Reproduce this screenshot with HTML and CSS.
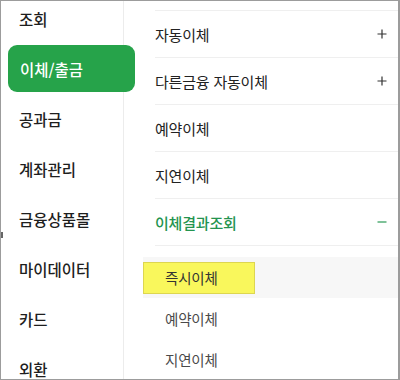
FILE: index.html
```html
<!DOCTYPE html>
<html lang="ko">
<head>
<meta charset="utf-8">
<link rel="stylesheet" href="styles.css">
</head>
<body>
<div class="frame">
  <nav class="side">
    <ul class="side-list">
      <li class="side-item">조회</li>
      <li class="side-item active">이체/출금</li>
      <li class="side-item">공과금</li>
      <li class="side-item">계좌관리</li>
      <li class="side-item">금융상품몰</li>
      <li class="side-item">마이데이터</li>
      <li class="side-item">카드</li>
      <li class="side-item">외환</li>
    </ul>
  </nav>
  <main class="panel">
    <div class="row"><span>자동이체</span>
      <svg class="ico" viewBox="0 0 10 10"><path d="M5 0.5V9.5M0.5 5H9.5" stroke="#333" stroke-width="1.2" fill="none"/></svg>
    </div>
    <div class="row"><span>다른금융 자동이체</span>
      <svg class="ico" viewBox="0 0 10 10"><path d="M5 0.5V9.5M0.5 5H9.5" stroke="#333" stroke-width="1.2" fill="none"/></svg>
    </div>
    <div class="row"><span>예약이체</span></div>
    <div class="row"><span>지연이체</span></div>
    <div class="row open"><span>이체결과조회</span>
      <svg class="ico" viewBox="0 0 10 10"><path d="M0.5 5H9.5" stroke="#2a9a55" stroke-width="1.2" fill="none"/></svg>
    </div>
    <ul class="sub">
      <li class="sub-item current"><span class="mark">즉시이체</span></li>
      <li class="sub-item">예약이체</li>
      <li class="sub-item">지연이체</li>
    </ul>
  </main>
  <span class="tick"></span>
</div>
</body>
</html>
```

FILE: styles.css
```css
* { box-sizing: border-box; }
html, body { margin: 0; padding: 0; background: #fff; }
body {
  font-family: "Noto Sans CJK KR", "Noto Sans", sans-serif;
  width: 400px;
  height: 380px;
  overflow: hidden;
}
.frame {
  position: relative;
  width: 400px;
  height: 380px;
  border: 1px solid #9c9c9c;
  border-right-width: 2px;
  display: flex;
  overflow: hidden;
}
.tick {
  position: absolute;
  left: -1px;
  top: 231px;
  width: 3px;
  height: 6px;
  background: #666;
}
.side {
  width: 123px;
  flex: none;
  border-right: 1px solid #ececec;
  position: relative;
  z-index: 1;
}
.side-list {
  list-style: none;
  margin: -6px 0 0 0;
  padding: 0;
  display: flex;
  flex-direction: column;
  gap: 3px;
}
.side-item {
  height: 47px;
  margin-left: 7px;
  width: 127px;
  padding-left: 11px;
  display: flex;
  align-items: center;
  font-size: 15.5px;
  font-weight: 500;
  color: #1e1e1e;
  border-radius: 9px;
  letter-spacing: 0;
}
.side-item.active {
  background: #26a34a;
  color: #fff;
  padding-left: 12px;
}
.panel {
  flex: 1;
  padding: 9px 0 0 31px;
}
.row {
  height: 47px;
  border-top: 1px solid #efefef;
  display: flex;
  align-items: center;
  justify-content: space-between;
  padding-right: 11px;
  font-size: 15px;
  color: #222;
  letter-spacing: -0.2px;
}
.row.open {
  color: #24944f;
  font-weight: 500;
  border-bottom: 1px solid #efefef;
  height: 48px;
}
.ico { width: 10px; height: 10px; }
.sub {
  list-style: none;
  margin: 0 0 0 -12px;
  padding: 11px 0 0 0;
}
.sub-item {
  height: 41px;
  display: flex;
  align-items: center;
  padding-left: 22px;
  font-size: 14.5px;
  color: #4a4a4a;
  letter-spacing: -0.2px;
}
.sub-item.current { background: #f7f7f7; }
.mark {
  margin-left: -22px;
  height: 32px;
  display: flex;
  align-items: center;
  padding: 0 36px 0 21px;
  background: #f9f75c;
  border: 1px solid #ddd650;
  color: #333;
}
```
